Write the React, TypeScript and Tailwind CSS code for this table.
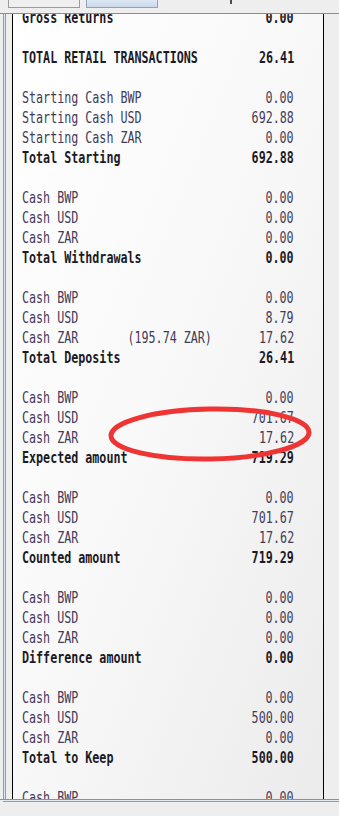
const rows: { label?: string; value?: string; bold?: boolean }[] = [
  { label: "Gross Returns", value: "0.00", bold: true },
  {},
  { label: "TOTAL RETAIL TRANSACTIONS", value: "26.41", bold: true },
  {},
  { label: "Starting Cash BWP", value: "0.00" },
  { label: "Starting Cash USD", value: "692.88" },
  { label: "Starting Cash ZAR", value: "0.00" },
  { label: "Total Starting", value: "692.88", bold: true },
  {},
  { label: "Cash BWP", value: "0.00" },
  { label: "Cash USD", value: "0.00" },
  { label: "Cash ZAR", value: "0.00" },
  { label: "Total Withdrawals", value: "0.00", bold: true },
  {},
  { label: "Cash BWP", value: "0.00" },
  { label: "Cash USD", value: "8.79" },
  { label: "Cash ZAR       (195.74 ZAR)", value: "17.62" },
  { label: "Total Deposits", value: "26.41", bold: true },
  {},
  { label: "Cash BWP", value: "0.00" },
  { label: "Cash USD", value: "701.67" },
  { label: "Cash ZAR", value: "17.62" },
  { label: "Expected amount", value: "719.29", bold: true },
  {},
  { label: "Cash BWP", value: "0.00" },
  { label: "Cash USD", value: "701.67" },
  { label: "Cash ZAR", value: "17.62" },
  { label: "Counted amount", value: "719.29", bold: true },
  {},
  { label: "Cash BWP", value: "0.00" },
  { label: "Cash USD", value: "0.00" },
  { label: "Cash ZAR", value: "0.00" },
  { label: "Difference amount", value: "0.00", bold: true },
  {},
  { label: "Cash BWP", value: "0.00" },
  { label: "Cash USD", value: "500.00" },
  { label: "Cash ZAR", value: "0.00" },
  { label: "Total to Keep", value: "500.00", bold: true },
  {},
  { label: "Cash BWP", value: "0.00" },
]

function Row({ label, value, bold }: { label?: string; value?: string; bold?: boolean }) {
  const tone = bold ? "font-bold text-[#1c1a26]" : "text-[#433b58]"
  return (
    <div className={`flex h-5 items-center leading-5 ${tone}`}>
      <span className="min-w-0 flex-1 origin-left scale-x-[0.73] whitespace-pre">{label ?? " "}</span>
      <span className="shrink-0 origin-right scale-x-[0.73] whitespace-pre">{value ?? ""}</span>
    </div>
  )
}

export default function App() {
  return (
    <div className="relative h-[816px] w-[339px] overflow-hidden bg-[#eeeeee]">
      {/* tab strip */}
      <div className="flex h-[13px] items-start gap-[6px] pl-2">
        <div className="h-2 w-[72px] border border-t-0 border-[#9a9a9a] bg-[#efefef]" />
        <div className="h-2 w-[72px] border border-t-0 border-[#8fa3bd] bg-gradient-to-b from-[#dfe8f4] to-[#c9d8ea]" />
        <div className="ml-[66px] h-[4px] w-[2px] bg-[#4a4a5a]" />
      </div>

      <div className="flex h-[786px] border-t border-[#8c8c8c]">
        <div className="ml-[3px] w-[3px] border-x border-[#8d9db8] bg-[#dde4ee]" />
        <div className="ml-[6px] h-full w-[312px] overflow-hidden border-x border-black bg-gradient-to-br from-white via-[#f8f8f8] to-[#ebebeb]">
          <div className="-mt-[6px] pl-[9px] pr-[29px] font-['DejaVu_Sans_Mono',monospace] text-[16px]">
            {rows.map((r, i) => (
              <Row key={i} {...r} />
            ))}
          </div>
        </div>
      </div>

      <div className="h-[2px] border-t border-[#7f93b0] bg-[#e4eaf2]" />
      <div className="ml-[3px] h-[2px] border-t border-[#8d9db8]" />

      {/* annotation */}
      <svg className="absolute left-0 top-0" width="339" height="816">
        <ellipse cx="210" cy="434" rx="99" ry="25" fill="none" stroke="#ef3434" strokeWidth="5" transform="rotate(-1 210 434)" />
      </svg>
    </div>
  )
}
